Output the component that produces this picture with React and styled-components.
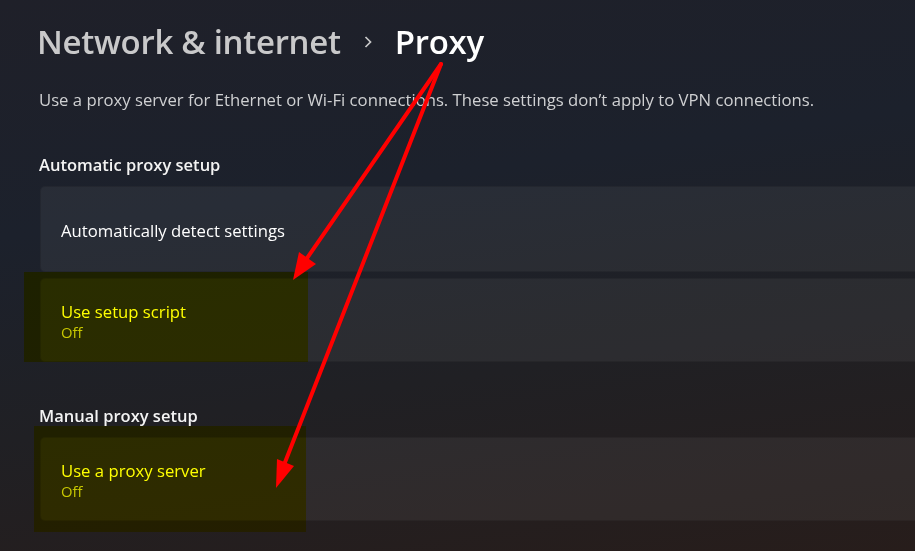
import styled, { createGlobalStyle } from "styled-components";

const GlobalStyle = createGlobalStyle`
  html, body {
    margin: 0;
    height: 100%;
    overflow: hidden;
  }
  body {
    background: linear-gradient(172deg, #1f2029 0%, #1c212c 35%, #202024 65%, #271d1b 100%);
    font-family: "Segoe UI", "Open Sans", "Noto Sans", sans-serif;
    color: #ffffff;
  }
`;

const Page = styled.div`
  position: relative;
  width: 915px;
  height: 551px;
  padding: 19px 0 0 39px;
  box-sizing: border-box;
`;

const Breadcrumb = styled.h1`
  display: flex;
  align-items: center;
  gap: 21px;
  margin: 0 0 0 -2px;
  font-size: 33px;
  font-weight: 600;
  line-height: 46px;
  letter-spacing: -0.3px;
`;

const Crumb = styled.span`
  color: ${(p) => (p.$current ? "#ffffff" : "#c9c9ca")};
`;

const Desc = styled.p`
  margin: 23px 0 0;
  font-size: 16.7px;
  line-height: 24px;
  color: #cfd0d2;
`;

const SectionTitle = styled.h2`
  margin: ${(p) => p.$top} 0 0;
  font-size: 16.5px;
  font-weight: 600;
  line-height: 24px;
  color: #f3f3f3;
`;

const List = styled.div`
  display: flex;
  flex-direction: column;
  gap: 6px;
  margin-top: 9px;
  margin-right: -8px;
`;

const Card = styled.div`
  position: relative;
  height: ${(p) => (p.$tall ? 86 : 84)}px;
  display: flex;
  flex-direction: column;
  justify-content: center;
  padding: 2px 20px 0;
  border-radius: 5px;
  background: rgba(255, 255, 255, 0.055);
  border: 1px solid rgba(0, 0, 0, 0.12);
  box-sizing: border-box;
  margin-left: 1px;
`;

const CardTitle = styled.div`
  font-size: 16.7px;
  line-height: 21px;
  color: #ffffff;
`;

const CardSub = styled.div`
  font-size: 14.8px;
  line-height: 20px;
  color: #c8c8c8;
`;

const Highlight = styled.div`
  position: absolute;
  top: ${(p) => p.$top}px;
  bottom: ${(p) => p.$bottom}px;
  left: ${(p) => p.$left}px;
  width: ${(p) => p.$width}px;
  background: #ffff00;
  mix-blend-mode: multiply;
  pointer-events: none;
`;

const Arrows = styled.svg`
  position: absolute;
  inset: 0;
  pointer-events: none;
`;

const Chevron = () => (
  <svg width="12" height="14" viewBox="0 0 12 14">
    <path d="M3.5 2 L8.5 7 L3.5 12" fill="none" stroke="#c9c9ca" strokeWidth="1.7" />
  </svg>
);

export default function App() {
  return (
    <>
      <GlobalStyle />
      <Page>
        <Breadcrumb>
          <Crumb>Network &amp; internet</Crumb>
          <Chevron />
          <Crumb $current>Proxy</Crumb>
        </Breadcrumb>
        <Desc>
          Use a proxy server for Ethernet or Wi-Fi connections. These settings don’t apply to VPN connections.
        </Desc>

        <SectionTitle $top="41px">Automatic proxy setup</SectionTitle>
        <List>
          <Card $tall>
            <CardTitle>Automatically detect settings</CardTitle>
          </Card>
          <Card>
            <CardTitle>Use setup script</CardTitle>
            <CardSub>Off</CardSub>
            <Highlight $top={-7} $bottom={-1} $left={-17} $width={284} />
          </Card>
        </List>

        <SectionTitle $top="42px">Manual proxy setup</SectionTitle>
        <List>
          <Card>
            <CardTitle>Use a proxy server</CardTitle>
            <CardSub>Off</CardSub>
            <Highlight $top={-12} $bottom={-12} $left={-7} $width={272} />
          </Card>
        </List>

        <Arrows width="915" height="551" viewBox="0 0 915 551">
          <g stroke="#ff0000" strokeWidth="4" strokeLinecap="round" fill="#ff0000">
            <line x1="441" y1="64" x2="303" y2="264" />
            <line x1="441" y1="64" x2="282" y2="470" />
          </g>
          <polygon points="293,280 299,252 316,264" fill="#ff0000" />
          <polygon points="276,488 277,459 294,466" fill="#ff0000" />
        </Arrows>
      </Page>
    </>
  );
}
